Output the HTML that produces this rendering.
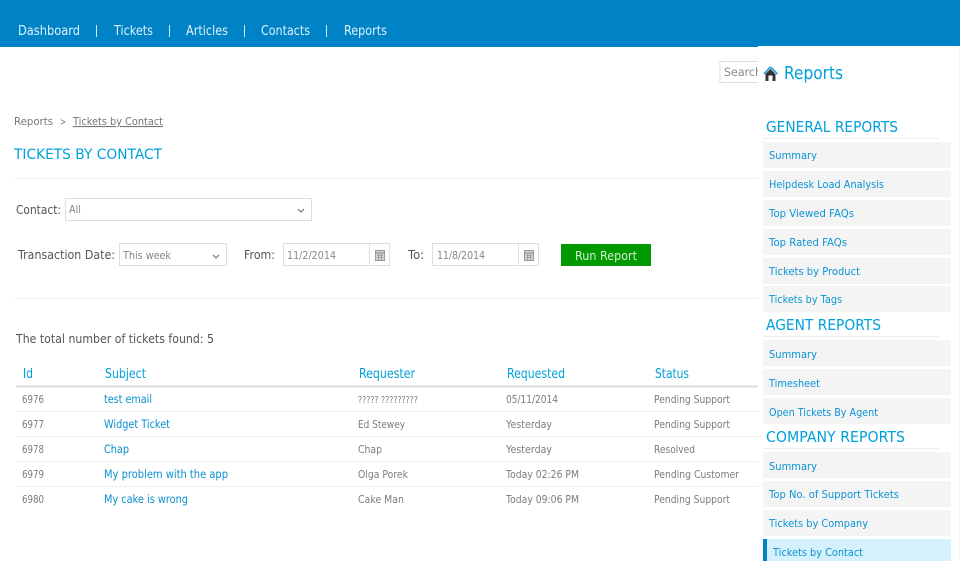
<!DOCTYPE html>
<html><head><meta charset="utf-8"><style>
html,body{margin:0;padding:0;background:#fff;width:960px;height:561px;overflow:hidden}
svg{display:block}
text{font-family:"DejaVu Sans","Liberation Sans",sans-serif;font-size:11px;fill:#777}
.n{font-size:13px;fill:#dcf3fb}
.h{font-size:13px;fill:#00a0dc}
.d{font-size:11px;fill:#807a7a}
.l{font-size:11.500px;fill:#0a8fd0}
.s{font-size:11px;fill:#0a94d4}
.t{font-size:12.500px;fill:#555}
.g{font-size:15.500px;fill:#00a0dc}
</style></head><body>
<svg width="960" height="561" viewBox="0 0 960 561" xmlns="http://www.w3.org/2000/svg">
<rect width="960" height="47" fill="#0082c6"/>
<text class="n" x="18" y="35" textLength="62" lengthAdjust="spacingAndGlyphs">Dashboard</text>
<text class="n" x="114" y="35" textLength="39" lengthAdjust="spacingAndGlyphs">Tickets</text>
<text class="n" x="186" y="35" textLength="42" lengthAdjust="spacingAndGlyphs">Articles</text>
<text class="n" x="261" y="35" textLength="49" lengthAdjust="spacingAndGlyphs">Contacts</text>
<text class="n" x="344" y="35" textLength="43" lengthAdjust="spacingAndGlyphs">Reports</text>
<g fill="#cfeaf6"><rect x="96" y="25" width="1" height="12"/><rect x="169" y="25" width="1" height="12"/><rect x="244" y="25" width="1" height="12"/><rect x="326" y="25" width="1" height="12"/></g>

<text x="14" y="125" style="font-size:11px" textLength="39" lengthAdjust="spacingAndGlyphs">Reports</text>
<text x="60" y="125" style="font-size:10px" textLength="6" lengthAdjust="spacingAndGlyphs">&gt;</text>
<text x="73" y="125" style="font-size:11px" text-decoration="underline" textLength="90" lengthAdjust="spacingAndGlyphs">Tickets by Contact</text>
<text x="14" y="159" style="font-size:14.500px;fill:#00a0dc" textLength="148" lengthAdjust="spacingAndGlyphs">TICKETS BY CONTACT</text>
<rect x="14" y="178" width="744" height="1" fill="#eee"/>

<text class="t" x="16" y="214" textLength="45" lengthAdjust="spacingAndGlyphs">Contact:</text>
<rect x="65.5" y="198.5" width="246" height="22" fill="#fff" stroke="#ddd"/>
<text x="69" y="213" style="font-size:10.500px;fill:#888" textLength="12" lengthAdjust="spacingAndGlyphs">All</text>
<path d="M298 209l3 3 3-3" fill="none" stroke="#666"/>

<text class="t" x="18" y="259" textLength="97" lengthAdjust="spacingAndGlyphs">Transaction Date:</text>
<rect x="119.5" y="243.5" width="107" height="22" fill="#fff" stroke="#ddd"/>
<text x="123" y="259" style="font-size:11px;fill:#887f85" textLength="48" lengthAdjust="spacingAndGlyphs">This week</text>
<path d="M213 255l3 3 3-3" fill="none" stroke="#666"/>

<text class="t" x="244" y="259" textLength="31" lengthAdjust="spacingAndGlyphs">From:</text>
<rect x="283.5" y="243.5" width="106" height="22" fill="#fff" stroke="#ddd"/>
<rect x="369" y="244" width="1" height="21" fill="#ddd"/>
<text x="287" y="259" style="font-size:11px;fill:#888" textLength="49" lengthAdjust="spacingAndGlyphs">11/2/2014</text>
<rect x="375.500" y="250.500" width="9" height="10" fill="#d4d4d4" stroke="#999"/>
<path d="M375 253h10" stroke="#888" fill="none"/>
<path d="M377 255.500h6M377 257.500h6M378.500 254v6M381.500 254v6" stroke="#999" stroke-width=".8" fill="none"/>
<text class="t" x="408" y="259" textLength="16" lengthAdjust="spacingAndGlyphs">To:</text>
<rect x="432.500" y="243.5" width="106" height="22" fill="#fff" stroke="#ddd"/>
<rect x="518" y="244" width="1" height="21" fill="#ddd"/>
<text x="437" y="259" style="font-size:11px;fill:#888" textLength="48" lengthAdjust="spacingAndGlyphs">11/8/2014</text>
<rect x="524.500" y="250.500" width="9" height="10" fill="#d4d4d4" stroke="#999"/>
<path d="M524 253h10" stroke="#888" fill="none"/>
<path d="M526 255.500h6M526 257.500h6M527.500 254v6M530.500 254v6" stroke="#999" stroke-width=".8" fill="none"/>
<rect x="561" y="244" width="90" height="22" fill="#009900"/>
<text x="575" y="260" style="font-size:12px;fill:#d5f0d5" textLength="62" lengthAdjust="spacingAndGlyphs">Run Report</text>
<rect x="14" y="298" width="744" height="1" fill="#eee"/>

<text class="t" x="16" y="343" textLength="198" lengthAdjust="spacingAndGlyphs">The total number of tickets found: 5</text>

<text class="h" x="23" y="378" textLength="10" lengthAdjust="spacingAndGlyphs">Id</text>
<text class="h" x="105" y="378" textLength="41" lengthAdjust="spacingAndGlyphs">Subject</text>
<text class="h" x="359" y="378" textLength="56" lengthAdjust="spacingAndGlyphs">Requester</text>
<text class="h" x="507" y="378" textLength="58" lengthAdjust="spacingAndGlyphs">Requested</text>
<text class="h" x="655" y="378" textLength="34" lengthAdjust="spacingAndGlyphs">Status</text>
<rect x="16" y="385.500" width="742" height="2" fill="#ddd"/>
<g fill="#eee"><rect x="16" y="411" width="742" height="1"/><rect x="16" y="436" width="742" height="1"/><rect x="16" y="461" width="742" height="1"/><rect x="16" y="486" width="742" height="1"/></g>

<text class="d" x="22" y="403" textLength="22" lengthAdjust="spacingAndGlyphs">6976</text>
<text class="l" x="104" y="403" textLength="48" lengthAdjust="spacingAndGlyphs">test email</text>
<text class="d" x="358" y="403" style="font-size:9.500px" textLength="60" lengthAdjust="spacingAndGlyphs">????? ?????????</text>
<text class="d" x="506" y="403" textLength="52" lengthAdjust="spacingAndGlyphs">05/11/2014</text>
<text class="d" x="654" y="403" textLength="76" lengthAdjust="spacingAndGlyphs">Pending Support</text>

<text class="d" x="22" y="428" textLength="22" lengthAdjust="spacingAndGlyphs">6977</text>
<text class="l" x="104" y="428" textLength="66" lengthAdjust="spacingAndGlyphs">Widget Ticket</text>
<text class="d" x="358" y="428" textLength="47" lengthAdjust="spacingAndGlyphs">Ed Stewey</text>
<text class="d" x="506" y="428" textLength="46" lengthAdjust="spacingAndGlyphs">Yesterday</text>
<text class="d" x="654" y="428" textLength="76" lengthAdjust="spacingAndGlyphs">Pending Support</text>

<text class="d" x="22" y="453" textLength="22" lengthAdjust="spacingAndGlyphs">6978</text>
<text class="l" x="104" y="453" textLength="25" lengthAdjust="spacingAndGlyphs">Chap</text>
<text class="d" x="358" y="453" textLength="24" lengthAdjust="spacingAndGlyphs">Chap</text>
<text class="d" x="506" y="453" textLength="46" lengthAdjust="spacingAndGlyphs">Yesterday</text>
<text class="d" x="654" y="453" textLength="41" lengthAdjust="spacingAndGlyphs">Resolved</text>

<text class="d" x="22" y="478" textLength="22" lengthAdjust="spacingAndGlyphs">6979</text>
<text class="l" x="104" y="478" textLength="124" lengthAdjust="spacingAndGlyphs">My problem with the app</text>
<text class="d" x="358" y="478" textLength="50" lengthAdjust="spacingAndGlyphs">Olga Porek</text>
<text class="d" x="506" y="478" textLength="73" lengthAdjust="spacingAndGlyphs">Today 02:26 PM</text>
<text class="d" x="654" y="478" textLength="85" lengthAdjust="spacingAndGlyphs">Pending Customer</text>

<text class="d" x="22" y="503" textLength="22" lengthAdjust="spacingAndGlyphs">6980</text>
<text class="l" x="104" y="503" textLength="84" lengthAdjust="spacingAndGlyphs">My cake is wrong</text>
<text class="d" x="358" y="503" textLength="46" lengthAdjust="spacingAndGlyphs">Cake Man</text>
<text class="d" x="506" y="503" textLength="73" lengthAdjust="spacingAndGlyphs">Today 09:06 PM</text>
<text class="d" x="654" y="503" textLength="76" lengthAdjust="spacingAndGlyphs">Pending Support</text>

<rect x="720" y="61.500" width="50" height="21" fill="#fff" stroke="#ddd"/>
<text x="724" y="76" style="font-size:11.500px;fill:#888" textLength="38" lengthAdjust="spacingAndGlyphs">Search</text>
<rect x="758" y="46" width="202" height="515" fill="#fff"/>
<rect x="959" y="47" width="1" height="514" fill="#f5f5f5"/>

<path d="M770.500 67L764 74M770.500 67L777.500 74" stroke="#2ea3d8" stroke-width="1.800" fill="none"/>
<path d="M770.500 69L765.500 74V81H768.500V75.500H772.500V81H775.500V74Z" fill="#333"/>
<text x="784" y="79" style="font-size:18px;fill:#00a0dc" textLength="59" lengthAdjust="spacingAndGlyphs">Reports</text>

<text class="g" x="766" y="132" textLength="132" lengthAdjust="spacingAndGlyphs">GENERAL REPORTS</text>
<rect x="763" y="138" width="177" height="1" fill="#eee"/>
<g fill="#f4f4f4">
<rect x="763" y="142" width="188" height="26"/><rect x="763" y="171" width="188" height="26"/><rect x="763" y="200" width="188" height="26"/><rect x="763" y="229" width="188" height="26"/><rect x="763" y="258" width="188" height="26"/><rect x="763" y="286" width="188" height="26"/>
<rect x="763" y="340" width="188" height="26"/><rect x="763" y="369" width="188" height="26"/><rect x="763" y="398" width="188" height="26"/>
<rect x="763" y="452" width="188" height="26"/><rect x="763" y="481" width="188" height="26"/><rect x="763" y="510" width="188" height="26"/>
</g>
<text class="s" x="769" y="159" textLength="48" lengthAdjust="spacingAndGlyphs">Summary</text>
<text class="s" x="769" y="188" textLength="115" lengthAdjust="spacingAndGlyphs">Helpdesk Load Analysis</text>
<text class="s" x="769" y="217" textLength="85" lengthAdjust="spacingAndGlyphs">Top Viewed FAQs</text>
<text class="s" x="769" y="246" textLength="78" lengthAdjust="spacingAndGlyphs">Top Rated FAQs</text>
<text class="s" x="769" y="275" textLength="91" lengthAdjust="spacingAndGlyphs">Tickets by Product</text>
<text class="s" x="769" y="303" textLength="73" lengthAdjust="spacingAndGlyphs">Tickets by Tags</text>

<text class="g" x="766" y="330" textLength="115" lengthAdjust="spacingAndGlyphs">AGENT REPORTS</text>
<rect x="763" y="336" width="177" height="1" fill="#eee"/>
<text class="s" x="769" y="358" textLength="48" lengthAdjust="spacingAndGlyphs">Summary</text>
<text class="s" x="769" y="387" textLength="51" lengthAdjust="spacingAndGlyphs">Timesheet</text>
<text class="s" x="769" y="416" textLength="109" lengthAdjust="spacingAndGlyphs">Open Tickets By Agent</text>

<text class="g" x="766" y="442" textLength="139" lengthAdjust="spacingAndGlyphs">COMPANY REPORTS</text>
<rect x="763" y="448" width="177" height="1" fill="#eee"/>
<text class="s" x="769" y="470" textLength="48" lengthAdjust="spacingAndGlyphs">Summary</text>
<text class="s" x="769" y="498" textLength="130" lengthAdjust="spacingAndGlyphs">Top No. of Support Tickets</text>
<text class="s" x="769" y="527" textLength="99" lengthAdjust="spacingAndGlyphs">Tickets by Company</text>
<rect x="763" y="539" width="188" height="22" fill="#d4f1fc"/>
<rect x="763" y="539" width="4" height="22" fill="#0082c6"/>
<text class="s" x="773" y="556" textLength="90" lengthAdjust="spacingAndGlyphs">Tickets by Contact</text>
</svg>
</body></html>
